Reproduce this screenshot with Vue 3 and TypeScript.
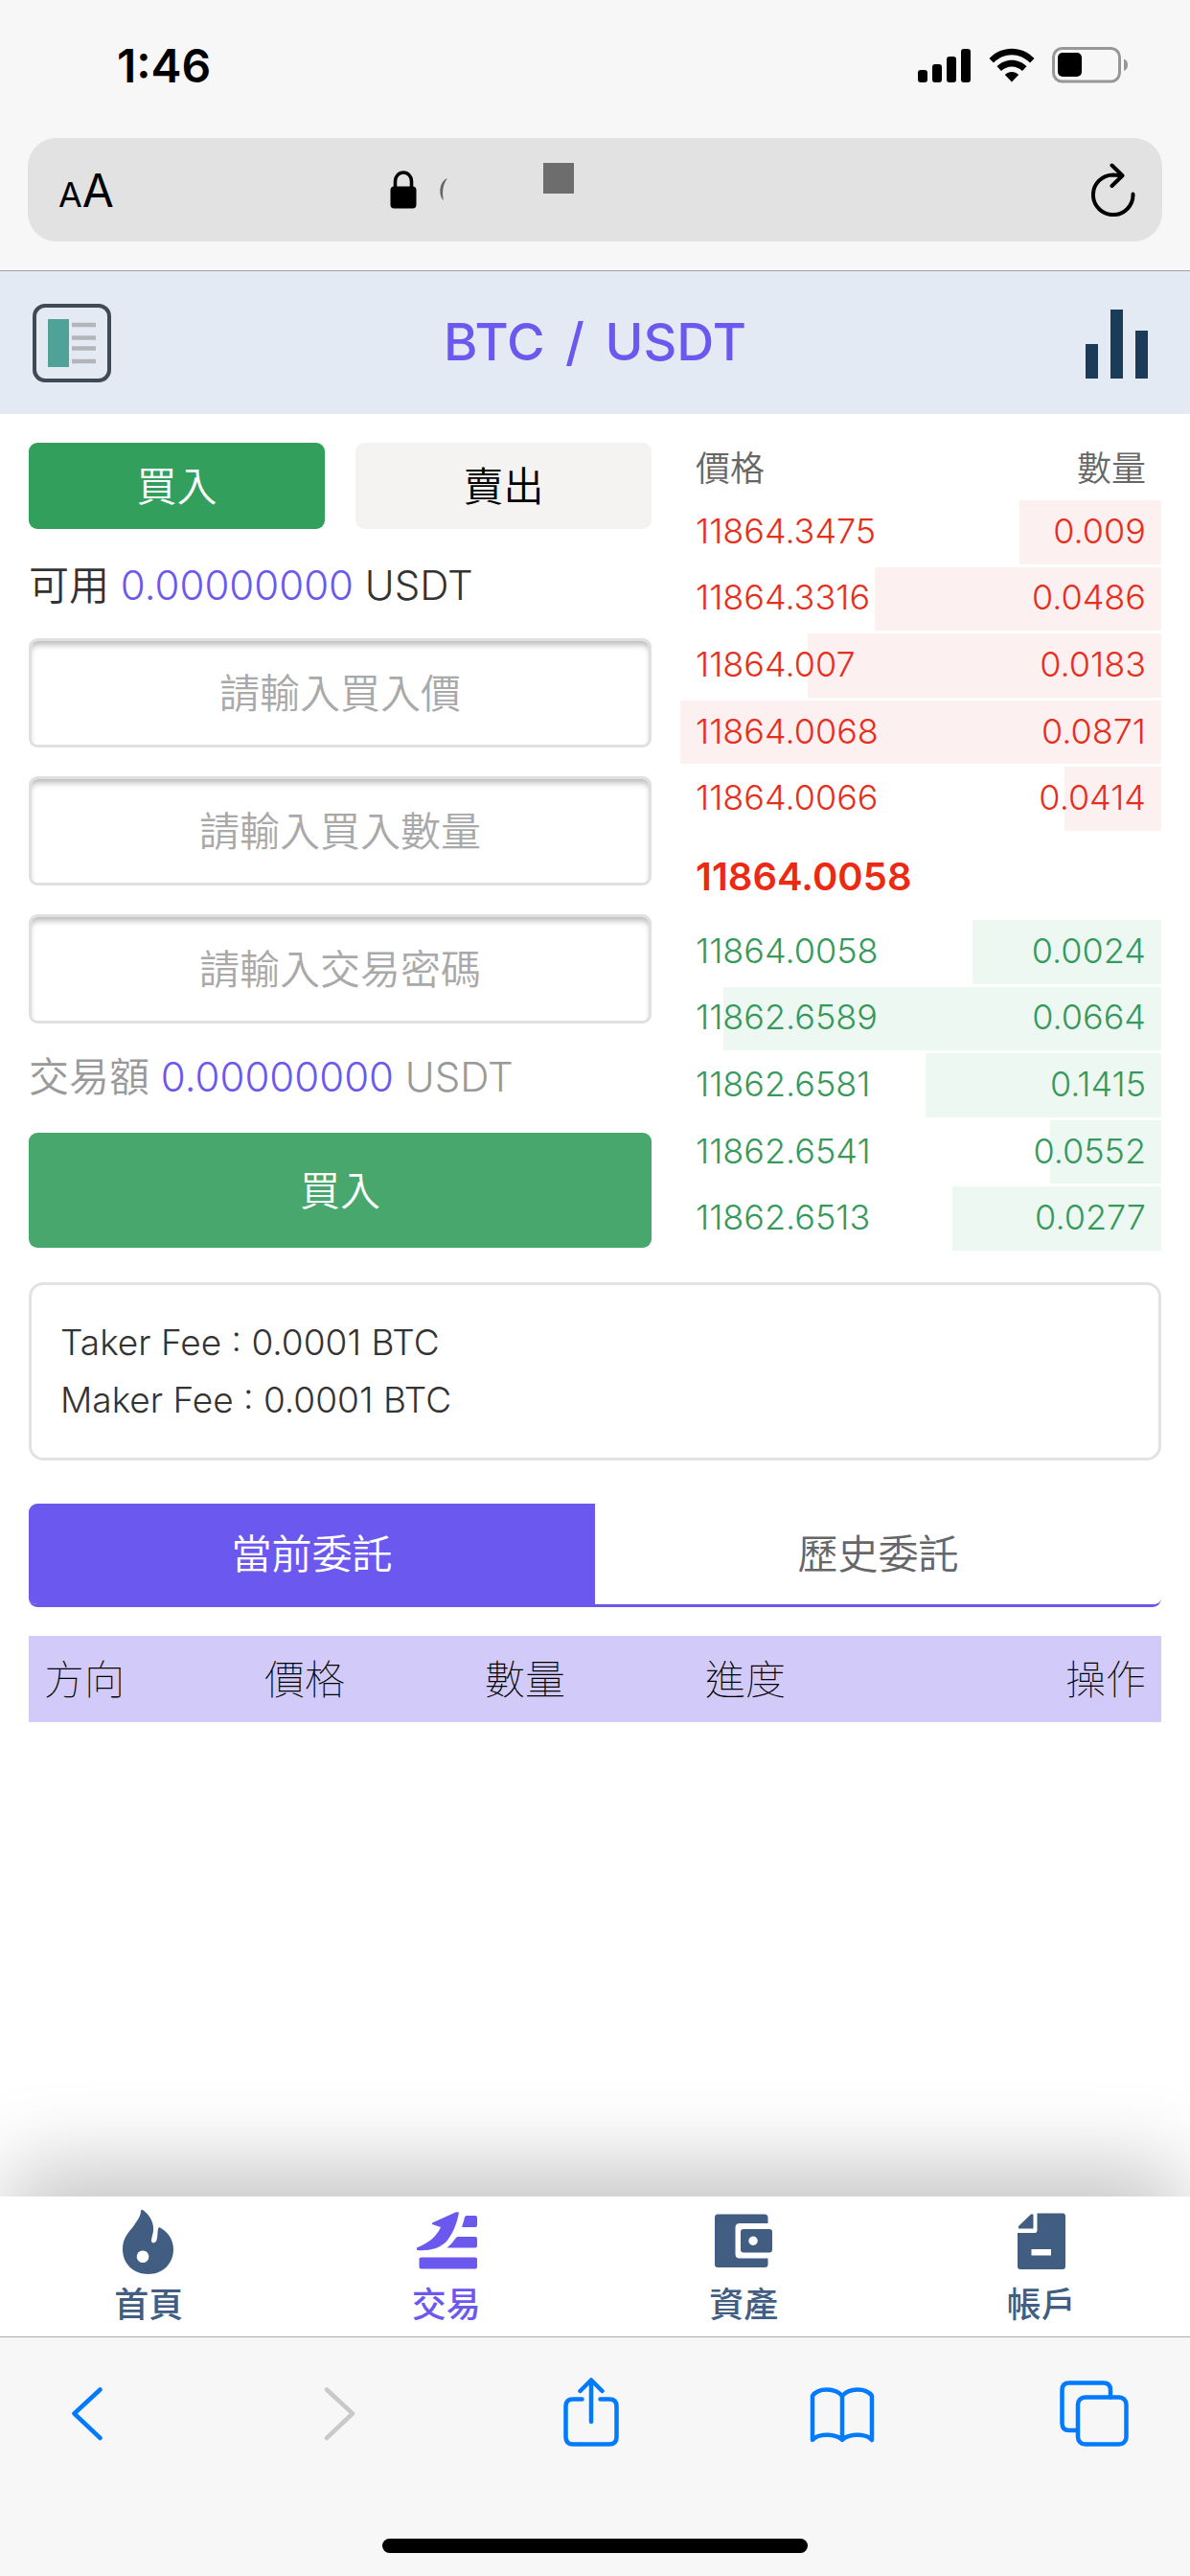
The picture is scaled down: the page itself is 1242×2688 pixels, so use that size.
<script setup lang="ts">
import { ref } from 'vue'

interface Order {
  price: string
  amount: string
  depth: number
}

const asks: Order[] = [
  { price: '11864.3475', amount: '0.009', depth: 29.5 },
  { price: '11864.3316', amount: '0.0486', depth: 59.6 },
  { price: '11864.007', amount: '0.0183', depth: 73.5 },
  { price: '11864.0068', amount: '0.0871', depth: 100 },
  { price: '11864.0066', amount: '0.0414', depth: 20.2 },
]

const bids: Order[] = [
  { price: '11864.0058', amount: '0.0024', depth: 39.2 },
  { price: '11862.6589', amount: '0.0664', depth: 91 },
  { price: '11862.6581', amount: '0.1415', depth: 49 },
  { price: '11862.6541', amount: '0.0552', depth: 23.1 },
  { price: '11862.6513', amount: '0.0277', depth: 43.4 },
]

const columns = ['方向', '價格', '數量', '進度', '操作']

const price = ref('')
const quantity = ref('')
const password = ref('')
</script>

<template>
  <div class="screen">
    <header class="browser-top">
      <div class="status">
        <span class="clock">1:46</span>
        <div class="indicators">
          <svg width="56" height="36" viewBox="0 0 56 36">
            <rect x="0" y="23" width="10" height="13" rx="3" />
            <rect x="15" y="17" width="10" height="19" rx="3" />
            <rect x="30" y="9" width="10" height="27" rx="3" />
            <rect x="45" y="1" width="10" height="35" rx="3" />
          </svg>
          <svg width="48" height="36" viewBox="0 0 48 36">
            <path d="M0.5 11C13-2.8 35-2.8 47.5 11L43 15.600C32 4.500 16 4.500 5 15.600Z" />
            <path d="M8.500 19.300C17 10.500 31 10.500 39.500 19.300L35 24C28.500 18 19.500 18 13 24Z" />
            <path d="M16.800 28C21 24 27 24 31.200 28L24 35.500Z" />
          </svg>
          <svg width="80" height="38" viewBox="0 0 80 38">
            <rect x="1.500" y="1.500" width="69" height="34.500" rx="9" fill="none" stroke="#979797" stroke-width="3" />
            <rect x="6" y="6" width="25" height="25" rx="5" />
            <path d="M75 12.500q4 1.500 4 6.200t-4 6.200z" fill="#979797" />
          </svg>
        </div>
      </div>
      <div class="address">
        <button class="plain text-size" aria-label="Text size"><small>A</small>A</button>
        <div class="site">
          <svg width="28" height="40" viewBox="0 0 28 40">
            <path d="M5.500 18V11a8.500 9 0 0 1 17 0v7" fill="none" stroke="#000" stroke-width="3.600" />
            <rect x="0.500" y="16.500" width="27" height="23" rx="4" />
          </svg>
          <svg class="arc" width="10" height="24" viewBox="0 0 10 24">
            <path d="M8 0C-2 4-1 20 4 23C2 16 3 6 8 0Z" fill="#666" />
          </svg>
          <i class="block"></i>
        </div>
        <button class="plain reload" aria-label="Reload">
          <svg width="46" height="56" viewBox="0 0 46 56" fill="none" stroke="#000" stroke-width="4" stroke-linecap="round" stroke-linejoin="round">
            <path d="M43.500 32.500A20.800 20.800 0 1 1 22.700 12.500L32 13.200M21.500 2.500L32.500 13.200L21.500 24" />
          </svg>
        </button>
      </div>
    </header>

    <main class="app">
      <div class="title-bar">
        <button class="plain" aria-label="Menu">
          <svg width="82" height="82" viewBox="0 0 82 82">
            <rect x="2" y="2" width="78" height="78" rx="11" fill="none" stroke="#404a56" stroke-width="4" />
            <rect x="16" y="16" width="22" height="50" fill="#50a298" />
            <path d="M41 22h25M41 35.500h25M41 46.500h25M41 60h25" stroke="#b3b5b8" stroke-width="4.500" />
          </svg>
        </button>
        <h1>BTC <span class="slash">/</span> USDT</h1>
        <button class="plain" aria-label="Chart">
          <svg width="82" height="82" viewBox="0 0 82 82" fill="#1b3c58">
            <rect x="7" y="42" width="13" height="36" />
            <rect x="33" y="6" width="13" height="72" />
            <rect x="59" y="28" width="13" height="50" />
          </svg>
        </button>
      </div>

      <div class="trade">
        <form class="order-form" @submit.prevent>
          <div class="sides">
            <button type="button" class="side buy">買入</button>
            <button type="button" class="side">賣出</button>
          </div>
          <p class="amount">可用 <b>0.00000000</b> USDT</p>
          <div class="fields">
            <input v-model="price" type="text" placeholder="請輸入買入價" aria-label="請輸入買入價" />
            <input v-model="quantity" type="text" placeholder="請輸入買入數量" aria-label="請輸入買入數量" />
            <input v-model="password" type="password" placeholder="請輸入交易密碼" aria-label="請輸入交易密碼" />
          </div>
          <p class="amount muted">交易額 <b>0.00000000</b> USDT</p>
          <button type="submit" class="submit">買入</button>
        </form>

        <section class="book">
          <div class="book-head"><span>價格</span><span>數量</span></div>
          <ul class="orders asks">
            <li v-for="o in asks" :key="o.price">
              <i class="depth" :style="{ width: o.depth + '%' }"></i>
              <span>{{ o.price }}</span><span>{{ o.amount }}</span>
            </li>
          </ul>
          <strong class="last">11864.0058</strong>
          <ul class="orders bids">
            <li v-for="o in bids" :key="o.price">
              <i class="depth" :style="{ width: o.depth + '%' }"></i>
              <span>{{ o.price }}</span><span>{{ o.amount }}</span>
            </li>
          </ul>
        </section>
      </div>

      <section class="fees">
        <p>Taker Fee : 0.0001 BTC</p>
        <p>Maker Fee : 0.0001 BTC</p>
      </section>

      <div class="tabs" role="tablist">
        <button role="tab" aria-selected="true" class="tab on">當前委託</button>
        <button role="tab" aria-selected="false" class="tab">歷史委託</button>
      </div>

      <table class="history">
        <thead>
          <tr><th v-for="c in columns" :key="c" scope="col">{{ c }}</th></tr>
        </thead>
      </table>
    </main>

    <nav class="nav">
      <a href="#home">
        <svg width="72" height="72" viewBox="0 0 72 72" fill="currentColor">
          <path fill-rule="evenodd" d="M30 2C37 7 42 15 41 24C40 30 39 32 39 34C39 38 45 37 45 31C46 27 45 22 47 20C56 24 62 33 62 43C62 58 51 69 36 69C20 69 9 58 9 43C9 31 15 26 21 18C25 12 28 8 28 3Q29 1 30 2ZM30 44.500a6.300 6.300 0 1 0 .1 0Z" />
        </svg>
        首頁
      </a>
      <a href="#trade" class="current">
        <svg width="72" height="72" viewBox="0 0 72 72" fill="currentColor">
          <path d="M49 4.500C47 16 43 26 36 35C28 43 16 45 5 44V41.500C16 37 25 31 30 20L21 17V15.500L46 4.200Z" />
          <path d="M57 8H66Q68 8 68 10V18Q68 20 66 20H52Q54 14 55 9.500Q55.500 8 57 8Z" />
          <path d="M48 30H66Q68 30 68 32V39.500Q68 41.500 66 41.500H36.500Q42 37 46 31Q46.700 30 48 30Z" />
          <rect x="7.500" y="51.500" width="60.500" height="12" rx="2" />
        </svg>
        交易
      </a>
      <a href="#assets">
        <svg width="72" height="72" viewBox="0 0 72 72" fill="currentColor">
          <path d="M9 6.500H58Q61.500 6.500 61.500 10V16H32Q27.500 16 27.500 20.500V48Q27.500 52.500 32 52.500H61.500V59Q61.500 62 58 62H9Q6 62 6 59V10Q6 6.500 9 6.500Z" />
          <path fill-rule="evenodd" d="M36 22H63Q66 22 66 25V43.500Q66 46.500 63 46.500H36Q33 46.500 33 43.500V25Q33 22 36 22ZM46 29.500a4.700 4.700 0 1 0 .1 0Z" />
        </svg>
        資產
      </a>
      <a href="#account">
        <svg width="72" height="72" viewBox="0 0 72 72" fill="currentColor">
          <path d="M12 21.500V19L25 6.500H27.500V21.500Z" />
          <path fill-rule="evenodd" d="M31.500 5.500H58Q61 5.500 61 8.500V61Q61 64 58 64H14Q11 64 11 61V26H29Q31.500 26 31.500 23ZM25.500 43V49.500H46V43Z" />
        </svg>
        帳戶
      </a>
    </nav>

    <footer class="browser-bottom">
      <div class="tools">
        <button class="plain" aria-label="Back">
          <svg width="80" height="80" viewBox="0 0 80 80"><path d="M53.500 14.500L26.500 39.500L53.500 65" /></svg>
        </button>
        <button class="plain off" aria-label="Forward" disabled>
          <svg width="80" height="80" viewBox="0 0 80 80"><path d="M27 14.500L54 39.500L27 65" /></svg>
        </button>
        <button class="plain" aria-label="Share">
          <svg width="80" height="80" viewBox="0 0 80 80"><path d="M30.500 24.500H21Q13.500 24.500 13.500 32V64Q13.500 71.500 21 71.500H59Q66.500 71.500 66.500 64V32Q66.500 24.500 59 24.500H49.500M40 48V5M28.500 16L40 4.500L51.500 16" /></svg>
        </button>
        <button class="plain" aria-label="Bookmarks">
          <svg width="80" height="80" viewBox="0 0 80 80"><path d="M40 21C33 12.500 15 12 9 21V67C15 60 33 60 40 67C47 60 65 60 71 67V21C65 12 47 12.500 40 21V67" /></svg>
        </button>
        <button class="plain" aria-label="Tabs">
          <svg width="80" height="80" viewBox="0 0 80 80">
            <path d="M57 22.500V15Q57 7.500 49.500 7.500H14Q6.500 7.500 6.500 15V49.500Q6.500 57 14 57H23" />
            <rect x="23" y="22.500" width="50.500" height="49" rx="7.500" />
          </svg>
        </button>
      </div>
      <div class="home-bar"></div>
    </footer>
  </div>
</template>

<style>
body {
  margin: 0;
}
</style>

<style scoped>
.screen {
  display: flex;
  flex-direction: column;
  min-height: 100vh;
  background: #fff;
  color: #333;
  font-family: Inter, 'Noto Sans CJK TC', sans-serif;
  font-size: 42px;
  font-weight: 350;
}

.screen * {
  box-sizing: border-box;
}

h1,
p,
ul {
  margin: 0;
  padding: 0;
}

svg {
  display: block;
  flex: none;
}

button,
input {
  font: inherit;
}

.plain {
  padding: 0;
  border: 0;
  background: none;
  color: inherit;
}

.browser-top {
  padding: 0 29px 30px;
  border-bottom: 1px solid #9ea3a8;
  background: #f7f7f7;
}

.status {
  display: flex;
  align-items: center;
  justify-content: space-between;
  height: 144px;
  padding: 0 35px 8px 93px;
}

.clock {
  color: #000;
  font-size: 48px;
  font-weight: 600;
}

.indicators {
  display: flex;
  align-items: center;
  gap: 18px;
}

.address {
  display: grid;
  grid-template-columns: 1fr auto 1fr;
  align-items: center;
  height: 108px;
  padding: 0 28px 0 32px;
  border-radius: 30px;
  background: #e2e2e2;
}

.text-size {
  justify-self: start;
  color: #000;
  font-size: 48px;
  font-weight: 400;
}

.text-size small {
  font-size: 36px;
}

.site {
  display: flex;
  align-items: center;
}

.arc {
  margin-left: 24px;
}

.block {
  width: 32px;
  height: 32px;
  margin: 0 240px 24px 98px;
  background: #6d6d6d;
}

.reload {
  justify-self: end;
}

.app {
  flex: 1;
}

.title-bar {
  display: flex;
  align-items: center;
  justify-content: space-between;
  height: 149px;
  padding: 0 34px;
  background: #e4eaf4;
}

h1 {
  padding-bottom: 3px;
  color: #6b58ee;
  font-size: 54px;
  font-weight: 500;
}

.slash {
  margin: 0 7px;
}

.trade {
  display: flex;
  gap: 30px;
  padding: 30px;
}

.order-form {
  flex: 650;
  min-width: 0;
}

.sides {
  display: flex;
  gap: 32px;
}

.side,
.submit {
  flex: 1;
  height: 90px;
  padding: 0 0 6px;
  border: 0;
  border-radius: 9px;
  background: #f5f3f2;
  color: #000;
}

.side.buy {
  background: #339f5c;
  color: #fff;
}

.submit {
  width: 100%;
  height: 120px;
  background: #47a76c;
  color: #fff;
}

.amount {
  height: 114px;
  line-height: 118px;
  white-space: nowrap;
}

.amount b {
  color: #6b58ee;
  font-weight: inherit;
}

.amount.muted {
  color: #999;
  line-height: 112px;
}

.fields {
  display: grid;
  gap: 30px;
}

.fields input {
  width: 100%;
  height: 114px;
  padding: 0 20px;
  border: 3px solid #e0e0e0;
  border-radius: 9px;
  outline: 0;
  background: #fff;
  box-shadow: inset 0 6px 6px -2px #bbb;
  text-align: center;
}

.fields input::placeholder {
  color: #a9a9a9;
  opacity: 1;
}

.book {
  flex: 502;
  min-width: 0;
  font-size: 36px;
}

.book-head {
  display: flex;
  justify-content: space-between;
  height: 60px;
  padding: 0 16px;
  color: #666;
  line-height: 54px;
}

.orders {
  display: grid;
  grid-template-rows: repeat(5, 1fr);
  height: 348px;
  list-style: none;
}

.orders li {
  position: relative;
  display: flex;
  align-items: center;
  justify-content: space-between;
  padding: 0 16px 6px;
}

.orders span {
  position: relative;
}

.depth {
  position: absolute;
  top: 0;
  right: 0;
  bottom: 3px;
}

.asks {
  color: #e62e1c;
}

.asks .depth {
  background: #fdf0f0;
}

.bids {
  color: #36995c;
}

.bids .depth {
  background: #eef8f2;
}

.last {
  display: block;
  padding: 0 16px;
  color: #ec2a14;
  font-size: 40px;
  font-weight: 600;
  line-height: 90px;
}

.fees {
  margin: 0 30px 45px;
  padding: 30px;
  border: 3px solid #e2e2e2;
  border-radius: 15px;
  font-size: 37px;
  line-height: 60px;
}

.tabs {
  display: flex;
  height: 108px;
  margin: 0 30px 30px;
  overflow: hidden;
  border-bottom: 3px solid #6b58ee;
  border-radius: 9px;
}

.tab {
  flex: 1;
  padding: 0 0 6px;
  border: 0;
  background: #fff;
  color: #666;
}

.tab.on {
  background: #6b58ee;
  color: #fff;
}

.history {
  width: calc(100% - 60px);
  height: 90px;
  margin: 0 30px;
  padding: 0 16px;
  border-spacing: 0;
  table-layout: fixed;
  background: #d2cbf9;
}

.history th {
  padding: 0 0 6px;
  color: #000;
  font-weight: 100;
  text-align: left;
}

.history th:last-child {
  text-align: right;
}

.nav {
  display: flex;
  height: 146px;
  background: #fff;
  box-shadow: 0 -38px 90px -8px rgba(0, 0, 0, 0.23);
}

.nav a {
  display: flex;
  flex: 1;
  flex-direction: column;
  align-items: center;
  padding-top: 12px;
  color: #415e82;
  font-size: 36px;
  font-weight: 500;
  line-height: 58px;
  text-decoration: none;
}

.nav a.current {
  color: #6b58ee;
}

.browser-bottom {
  position: relative;
  padding-bottom: 24px;
  border-top: 1px solid #aaa;
  background: #f7f7f7;
}

.tools {
  display: flex;
  justify-content: space-between;
  padding: 40px 60px 90px 51px;
}

.tools svg {
  fill: none;
  stroke: #007aff;
  stroke-width: 4.500;
  stroke-linecap: round;
  stroke-linejoin: round;
}

.tools .off svg {
  stroke: #c9c9c9;
}

.home-bar {
  width: 444px;
  height: 15px;
  margin: 0 auto;
  border-radius: 8px;
  background: #000;
}
</style>
